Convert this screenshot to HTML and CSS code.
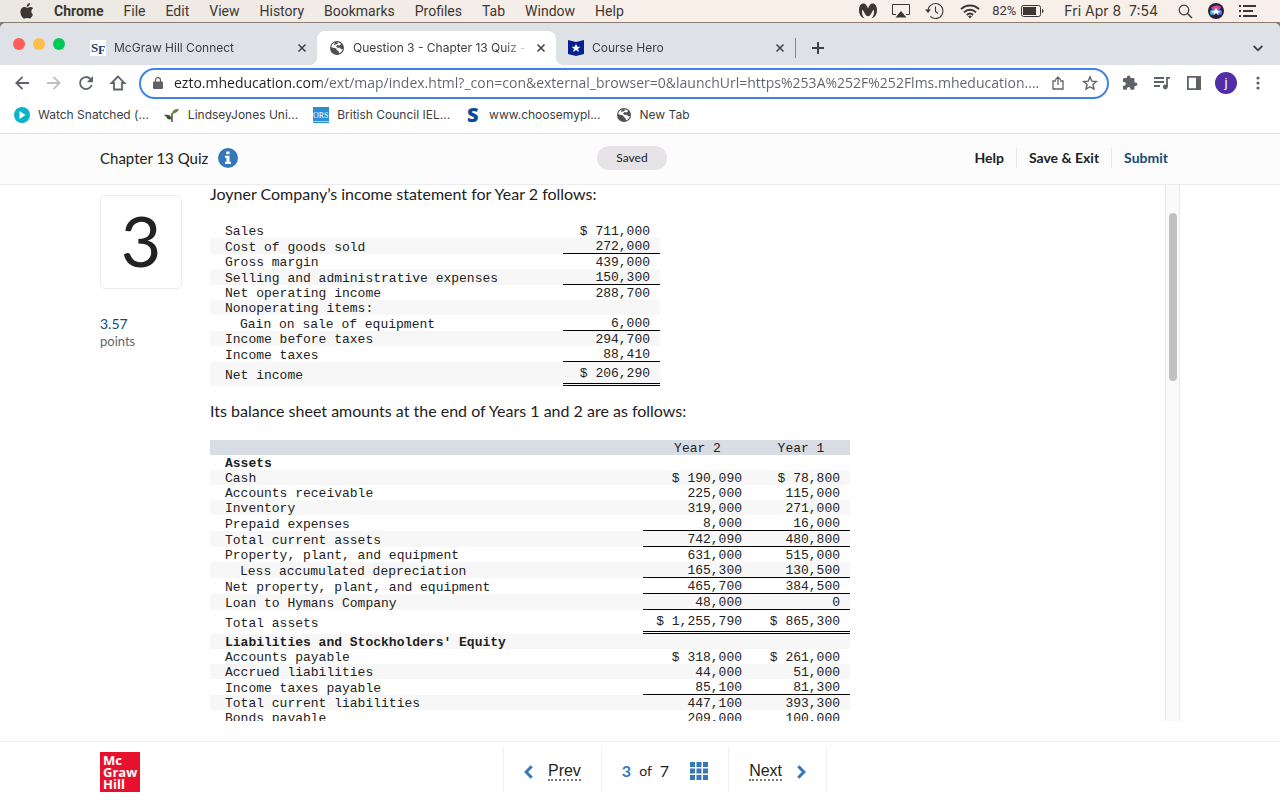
FILE: index.html
```html
<!DOCTYPE html>
<html lang="en">
<head>
  <meta charset="UTF-8">
  <meta name="viewport" content="width=device-width, initial-scale=1.0">
  <title>Question 3 - Chapter 13 Quiz</title>
  <link rel="stylesheet" href="styles.css">
</head>
<body>
  <!-- System menu bar -->
  <div class="menubar">
    <nav class="menus">
      <svg class="apple" width="14" height="16" viewBox="0 0 14 16"><path fill="#3c3733" d="M9.9 0c.1 1.1-.3 2-.9 2.700-.6.7-1.400 1.100-2.300 1.100-.1-1 .3-1.900.9-2.600C8.200.5 9.100.1 9.900 0zM13 11.600c-.4 1-1.700 3.700-3 3.900-1 .1-1.500-.6-2.800-.6s-1.800.6-2.800.6C2.600 15.500.4 11.800.4 8.700.4 5.600 2.400 4 4.200 4c1.200 0 2.100.7 2.900.7.700 0 1.900-.9 3.300-.8 1 0 2 .5 2.700 1.400-2.400 1.500-2.200 5.200-.1 6.300z"/></svg>
      <button class="menu app">Chrome</button>
      <button class="menu">File</button>
      <button class="menu">Edit</button>
      <button class="menu">View</button>
      <button class="menu">History</button>
      <button class="menu">Bookmarks</button>
      <button class="menu">Profiles</button>
      <button class="menu">Tab</button>
      <button class="menu">Window</button>
      <button class="menu">Help</button>
    </nav>
    <div class="status">
      <svg width="18" height="16" viewBox="0 0 18 16"><path fill="#3c3733" d="M4.500.5C6.500.5 8 2.500 9 5.500 10 2.500 11.500.5 13.500.5c2.700 0 4.500 2.700 4.500 6.500 0 4-2 7.500-5.500 8.500 2.200-2.400 3-5.500 2.300-9-1.300 1.300-2.100 3.200-3 4.800-.7 1.200-1.700 1.900-2.800 1.900s-2.100-.7-2.800-1.900c-.9-1.600-1.700-3.500-3-4.800-.7 3.500.1 6.600 2.300 9C2 14.500 0 11 0 7 0 3.200 1.800.5 4.500.5z"/></svg>
      <svg width="18" height="16" viewBox="0 0 18 16"><path fill="none" stroke="#3c3733" d="M4 11.500H.5v-10h17v10H14"/><path fill="#3c3733" d="M9 8l5.500 6.500h-11z"/></svg>
      <svg width="20" height="18" viewBox="0 0 20 18"><path fill="none" stroke="#3c3733" stroke-width="1.100" d="M3 9a7.500 7.500 0 1 1 2.300 5.400M10.500 4.500V9.500l2.500 2"/><path fill="#3c3733" d="M0 7.500h6L3 11z"/></svg>
      <svg width="20" height="15" viewBox="0 0 20 15"><path fill="none" stroke="#3c3733" stroke-width="1.900" d="M1 5.200c5-5 13-5 18 0M4 8.300c3.400-3.400 8.600-3.400 12 0M6.800 11c1.900-1.700 4.500-1.700 6.400 0"/><path fill="#3c3733" d="M8 12.300c1.300-1 2.700-1 4 0L10 14.500z"/></svg>
      <span class="battery-text">82%</span>
      <svg class="battery" width="23" height="12" viewBox="0 0 23 12"><rect x=".5" y=".5" width="19" height="11" rx="2" fill="none" stroke="#3c3733"/><rect x="2" y="2" width="13" height="8" fill="#3c3733"/><path fill="#3c3733" d="M21 4c2 .5 2 3.500 0 4z"/></svg>
      <span class="clock">Fri Apr 8&nbsp; 7:54</span>
      <svg class="spotlight" width="15" height="15" viewBox="0 0 15 15"><circle cx="6" cy="6" r="4.800" fill="none" stroke="#3c3733" stroke-width="1.200"/><path stroke="#3c3733" stroke-width="1.500" d="M9.500 9.500l4.500 4.500"/></svg>
      <svg class="siri" width="16" height="16" viewBox="0 0 16 16">
        <circle cx="8" cy="8" r="8" fill="#26203a"/>
        <path fill="#e0408c" d="M3 5c3-3 7-3 10-1-1 3-3 4-5 4S4 7 3 5z"/>
        <path fill="#3bb8e0" d="M2 8c3-2 5-1 6 0-1 2-3 4-5 4-1-1-1-2-1-4z"/>
        <path fill="#4a78e8" d="M14 8c-3-2-5-1-6 0 1 2 3 4 5 4 1-1 1-2 1-4z"/>
        <path fill="#fff" d="M8 4.500l1.500 3L13 9l-3 .5.500 3L8 10l-2.500 2.500.5-3L3 9l3.500-1.500z"/>
      </svg>
      <svg class="list" width="18" height="12" viewBox="0 0 18 12"><path stroke="#3c3733" stroke-width="2" d="M0 1h2M0 6h2M0 11h2M4 1h13M4 6h10M4 11h14"/></svg>
    </div>
  </div>

  <div class="window">
    <!-- Tabs -->
    <div class="tabstrip">
      <div class="lights"><i class="red"></i><i class="yellow"></i><i class="green"></i></div>
      <div class="tab">
        <svg width="16" height="16" viewBox="0 0 16 16"><rect width="16" height="16" fill="#fff"/><text x="1" y="12" font-family="Liberation Serif, serif" font-size="13" font-weight="700" fill="#1f3864">S</text><text x="8" y="14" font-family="Liberation Serif, serif" font-size="12" font-weight="700" fill="#1f3864">F</text></svg>
        <span class="tab-title">McGraw Hill Connect</span>
        <button class="close" aria-label="Close tab"><svg width="8" height="8" viewBox="0 0 8 8"><path d="M.5.5l7 7M7.500.5l-7 7"/></svg></button>
      </div>
      <div class="tab active">
        <svg width="16" height="16" viewBox="0 0 16 16"><circle cx="8" cy="8" r="7" fill="#4d5156"/><path fill="#fff" d="M8 2.200c1.800 0 3.200.7 4.200 1.800L10.500 5.500 8.500 5 7 6.500l1.500 1.300H11l1 1.500 1.800-.3c-.4 2-1.800 3.800-3.800 4.500l-.5-2.500-2-1V8.500L4 7.800 2.200 7C2.600 4.200 5 2.200 8 2.200z"/><path fill="#4d5156" d="M6 2l3 .5-.5 1.500L5 5z"/></svg>
        <span class="tab-title">Question 3 - Chapter 13 Quiz -</span>
        <button class="close" aria-label="Close tab"><svg width="8" height="8" viewBox="0 0 8 8"><path d="M.5.5l7 7M7.500.5l-7 7"/></svg></button>
      </div>
      <div class="tab">
        <svg width="16" height="16" viewBox="0 0 16 16"><path fill="#06218f" d="M0 0l8 2 8-2v14l-8 2-8-2z"/><path fill="#fff" d="M8 3.800l1.300 3h3.200L10 8.800l1 3.200-3-1.900L5 12l1-3.200-2.500-2h3.200z"/></svg>
        <span class="tab-title">Course Hero</span>
        <button class="close" aria-label="Close tab"><svg width="8" height="8" viewBox="0 0 8 8"><path d="M.5.5l7 7M7.500.5l-7 7"/></svg></button>
      </div>
      <button class="new-tab" aria-label="New tab"><svg width="12" height="12" viewBox="0 0 12 12"><path stroke="#3c4043" stroke-width="2" d="M6 0v12M0 6h12"/></svg></button>
      <button class="tab-search" aria-label="Search tabs"><svg width="10" height="7" viewBox="0 0 10 7"><path fill="none" stroke="#3c4043" stroke-width="1.800" d="M.7 1L5 5.300 9.300 1"/></svg></button>
    </div>

    <!-- Toolbar -->
    <div class="toolbar">
      <button class="tool" aria-label="Back"><svg width="14" height="14" viewBox="0 0 14 14"><path class="line" d="M14 7H1.500M7.500.8L1.300 7l6.200 6.200"/></svg></button>
      <button class="tool off" aria-label="Forward"><svg width="14" height="14" viewBox="0 0 14 14"><path class="line" d="M0 7h12.500M6.500.8L12.700 7l-6.200 6.200"/></svg></button>
      <button class="tool" aria-label="Reload"><svg width="14" height="14" viewBox="0 0 14 14"><path class="line" d="M12.700 9A6 6 0 1 1 11.400 2.900L13 4.500"/><path fill="#5f6368" d="M14 0v6.200H7.800z"/></svg></button>
      <button class="tool" aria-label="Home"><svg width="16" height="16" viewBox="0 0 16 16"><path class="line" d="M8 1.500L1.500 8H4v6.500h8V8h2.500z"/></svg></button>
      <div class="omnibox">
        <svg width="10" height="12" viewBox="0 0 10 12"><path fill="#5f6368" d="M1 4.500h8a1 1 0 0 1 1 1V11a1 1 0 0 1-1 1H1a1 1 0 0 1-1-1V5.500a1 1 0 0 1 1-1z"/><path fill="none" stroke="#5f6368" stroke-width="1.300" d="M2.500 5V3a2.500 2.300 0 0 1 5 0v2"/></svg>
        <input class="url" type="text" aria-label="Address" value="ezto.mheducation.com/ext/map/index.html?_con=con&amp;external_browser=0&amp;launchUrl=https%253A%252F%252Flms.mheducation....">
        <button class="tool" aria-label="Share"><svg width="12" height="14" viewBox="0 0 12 14"><path fill="none" stroke="#5f6368" stroke-width="1.300" d="M4 5H1v8h10V5H8M6 9V1.200M3.300 3.800L6 1.100l2.700 2.700"/></svg></button>
        <button class="tool" aria-label="Bookmark this tab"><svg width="16" height="16" viewBox="0 0 16 16"><path fill="none" stroke="#5f6368" stroke-width="1.400" d="M8 1.800l1.800 4.300 4.600.4-3.500 3 1.100 4.600L8 11.700l-4 2.400 1.100-4.600-3.500-3 4.600-.4z"/></svg></button>
      </div>
      <button class="tool" aria-label="Extensions"><svg width="16" height="16" viewBox="0 0 16 16"><path fill="#5f6368" d="M13.700 7.500H12.500V4.300c0-.7-.6-1.300-1.300-1.300H8.500V2.200a1.800 1.800 0 0 0-3.600 0V3H2.200C1.500 3 1 3.600 1 4.300v2.600h1a1.900 1.900 0 0 1 0 3.800H1v2.900c0 .7.500 1.200 1.200 1.200h2.700v-1a1.800 1.800 0 0 1 3.600 0v1h2.700c.7 0 1.300-.5 1.300-1.200v-2.700h1.200a1.700 1.700 0 0 0 0-3.400z"/></svg></button>
      <button class="tool" aria-label="Media controls"><svg width="16" height="14" viewBox="0 0 16 14"><path class="line" d="M0 2h10M0 6h10M0 10h6M13 11V1.800h3"/><circle cx="11.300" cy="11" r="2.400" fill="#5f6368"/></svg></button>
      <button class="tool" aria-label="Side panel"><svg width="14" height="14" viewBox="0 0 14 14"><path fill="none" stroke="#5f6368" stroke-width="1.800" d="M.9.9h12.200v12.200H.9z"/><path fill="#5f6368" d="M9 0h5v14H9z"/></svg></button>
      <button class="tool" aria-label="Profile"><span class="avatar">j</span></button>
      <button class="tool" aria-label="Menu"><svg width="4" height="14" viewBox="0 0 4 14"><circle cx="2" cy="2" r="1.600" fill="#5f6368"/><circle cx="2" cy="7" r="1.600" fill="#5f6368"/><circle cx="2" cy="12" r="1.600" fill="#5f6368"/></svg></button>
    </div>

    <!-- Bookmarks -->
    <nav class="bookmarks">
      <a href="#"><svg width="16" height="16" viewBox="0 0 16 16"><circle cx="8" cy="8" r="8" fill="#0ab4c8"/><path fill="#fff" d="M5.500 4l6 4-6 4z"/></svg>Watch Snatched (...</a>
      <a href="#"><svg width="16" height="16" viewBox="0 0 16 16"><path fill="none" stroke="#5b4a35" stroke-width="1.500" d="M8 15V6"/><path fill="#2f5a2c" d="M0 8c4-1 7 0 8 4-3 1-5 0-5.500-2z"/><path fill="#5b8a3c" d="M8 7c0-4 3-5 7-5-1 2-2 4-7 5z"/></svg>LindseyJones Uni...</a>
      <a href="#"><svg width="16" height="16" viewBox="0 0 16 16"><rect width="16" height="16" fill="#2b8fd8"/><path stroke="#a9d3ef" d="M0 14.500h16"/><text x="0" y="11" font-family="Liberation Serif, serif" font-size="8" fill="#fff">ORS</text></svg>British Council IEL...</a>
      <a href="#"><svg width="16" height="16" viewBox="0 0 16 16"><text x="2" y="15" font-family="Open Sans, sans-serif" font-size="20" font-weight="800" fill="#0b4a94">S</text></svg>www.choosemypl...</a>
      <a href="#"><svg width="16" height="16" viewBox="0 0 16 16"><circle cx="8" cy="8" r="7" fill="#4d5156"/><path fill="#fff" d="M8 2.200c1.800 0 3.200.7 4.200 1.800L10.500 5.500 8.500 5 7 6.500l1.500 1.300H11l1 1.500 1.800-.3c-.4 2-1.800 3.800-3.800 4.500l-.5-2.500-2-1V8.500L4 7.800 2.200 7C2.600 4.200 5 2.200 8 2.200z"/><path fill="#4d5156" d="M6 2l3 .5-.5 1.500L5 5z"/></svg>New Tab</a>
    </nav>

    <!-- Quiz page -->
    <header class="quiz-header">
      <div class="wrap header-row">
        <div class="quiz-title">
          <span>Chapter 13 Quiz</span>
          <button class="info" aria-label="Information"><svg width="20" height="20" viewBox="0 0 20 20"><circle cx="10" cy="10" r="10" fill="#3578b9"/><path fill="#fff" d="M8.300 3.500h3.200v2.800H8.300zM7 7.800h4.500v6H13V16H7v-2.200h1.500V10H7z"/></svg></button>
        </div>
        <div class="saved">Saved</div>
        <div class="actions">
          <button>Help</button>
          <button>Save &amp; Exit</button>
          <button class="submit">Submit</button>
        </div>
      </div>
    </header>

    <main class="wrap question">
      <aside class="meta">
        <div class="number">3</div>
        <div class="score">3.57</div>
        <div class="points">points</div>
      </aside>
      <section class="content">
        <p>Joyner Company’s income statement for Year 2 follows:</p>
        <table class="income">
          <tbody>
            <tr><td>Sales</td><td>$ 711,000</td></tr>
            <tr><td>Cost of goods sold</td><td class="sum">272,000</td></tr>
            <tr><td>Gross margin</td><td>439,000</td></tr>
            <tr><td>Selling and administrative expenses</td><td class="sum">150,300</td></tr>
            <tr><td>Net operating income</td><td>288,700</td></tr>
            <tr><td>Nonoperating items:</td><td></td></tr>
            <tr><td class="indent">Gain on sale of equipment</td><td class="sum">6,000</td></tr>
            <tr><td>Income before taxes</td><td>294,700</td></tr>
            <tr><td>Income taxes</td><td class="sum">88,410</td></tr>
            <tr><td>Net income</td><td class="total">$ 206,290</td></tr>
          </tbody>
        </table>
        <p>Its balance sheet amounts at the end of Years 1 and 2 are as follows:</p>
        <table class="balance">
          <thead>
            <tr><th></th><th>Year 2</th><th>Year 1</th></tr>
          </thead>
          <tbody>
            <tr><td><b>Assets</b></td><td></td><td></td></tr>
            <tr><td>Cash</td><td>$ 190,090</td><td>$ 78,800</td></tr>
            <tr><td>Accounts receivable</td><td>225,000</td><td>115,000</td></tr>
            <tr><td>Inventory</td><td>319,000</td><td>271,000</td></tr>
            <tr><td>Prepaid expenses</td><td class="sum">8,000</td><td class="sum">16,000</td></tr>
            <tr><td>Total current assets</td><td class="sum">742,090</td><td class="sum">480,800</td></tr>
            <tr><td>Property, plant, and equipment</td><td>631,000</td><td>515,000</td></tr>
            <tr><td class="indent">Less accumulated depreciation</td><td class="sum">165,300</td><td class="sum">130,500</td></tr>
            <tr><td>Net property, plant, and equipment</td><td class="sum">465,700</td><td class="sum">384,500</td></tr>
            <tr><td>Loan to Hymans Company</td><td class="sum">48,000</td><td class="sum">0</td></tr>
            <tr><td>Total assets</td><td class="total">$ 1,255,790</td><td class="total">$ 865,300</td></tr>
            <tr><td><b>Liabilities and Stockholders' Equity</b></td><td></td><td></td></tr>
            <tr><td>Accounts payable</td><td>$ 318,000</td><td>$ 261,000</td></tr>
            <tr><td>Accrued liabilities</td><td>44,000</td><td>51,000</td></tr>
            <tr><td>Income taxes payable</td><td class="sum">85,100</td><td class="sum">81,300</td></tr>
            <tr><td>Total current liabilities</td><td>447,100</td><td>393,300</td></tr>
            <tr><td>Bonds payable</td><td>209,000</td><td>100,000</td></tr>
          </tbody>
        </table>
      </section>
      <div class="scroll-track"><div class="scroll-thumb"></div></div>
    </main>

    <footer class="quiz-footer">
      <div class="wrap footer-row">
        <div class="mh-logo">Mc<br>Graw<br>Hill</div>
        <nav class="pager">
          <a class="step" href="#"><svg width="9" height="14" viewBox="0 0 9 14"><path d="M7.700 1.300L2.200 7l5.500 5.700"/></svg><span>Prev</span></a>
          <div class="count"><b>3</b> <span class="of">of</span> <span>7</span>
            <button class="grid" aria-label="All questions"><svg width="18" height="18" viewBox="0 0 18 18"><path fill="#3578b9" d="M0 0h5v5H0zM6.500 0h5v5h-5zM13 0h5v5h-5zM0 6.500h5v5H0zM6.500 6.500h5v5h-5zM13 6.500h5v5h-5zM0 13h5v5H0zM6.500 13h5v5h-5zM13 13h5v5h-5z"/></svg></button>
          </div>
          <a class="step" href="#"><span>Next</span><svg width="9" height="14" viewBox="0 0 9 14"><path d="M1.300 1.300L6.800 7l-5.500 5.700"/></svg></a>
        </nav>
      </div>
    </footer>
  </div>
</body>
</html>
```
FILE: styles.css
```css
* {
  box-sizing: border-box;
}

body {
  margin: 0;
  height: 100vh;
  display: flex;
  flex-direction: column;
  overflow: hidden;
  background: #8d7c72;
  color: #222;
  font-family: Lato, "Liberation Sans", sans-serif;
}

button {
  margin: 0;
  padding: 0;
  border: none;
  background: none;
  color: inherit;
  font: inherit;
}

svg {
  display: block;
  flex: none;
  overflow: visible;
}

a {
  color: inherit;
  text-decoration: none;
}

/* System menu bar */
.menubar {
  display: flex;
  justify-content: space-between;
  align-items: center;
  height: 22px;
  margin-bottom: 1px;
  padding: 0 23px 0 20px;
  background: linear-gradient(90deg, #ebe8e2, #f8efe9 50%, #f8efea);
  color: #3c3733;
  font: 14px/22px Roboto, sans-serif;
}

.menus,
.status {
  display: flex;
  align-items: center;
}

.menus {
  gap: 20px;
}

.app {
  font-weight: 700;
}

.status > * {
  margin-left: 15px;
}

.status .battery-text {
  margin-left: 12px;
  font-size: 13px;
}

.status .battery {
  margin-left: 5px;
}

.status .clock,
.status .spotlight {
  margin-left: 20px;
}

.clock {
  font: 14px/22px Inter, sans-serif;
}

/* Browser window */
.window {
  flex: 1;
  min-height: 0;
  display: flex;
  flex-direction: column;
  border-radius: 6px 6px 0 0;
  overflow: hidden;
  background: #fff;
}

.tabstrip {
  display: flex;
  align-items: flex-end;
  height: 42px;
  padding-right: 12px;
  background: #dee1e6;
  color: #3c4043;
  font: 12px/16px Inter, sans-serif;
}

.lights {
  display: flex;
  gap: 8px;
  width: 78px;
  padding: 0 0 15px 13px;
}

.lights i {
  width: 12px;
  height: 12px;
  border-radius: 50%;
}

.red {
  background: #ff5c5c;
}

.yellow {
  background: #ffbd4c;
}

.green {
  background: #00ca56;
}

.tab {
  position: relative;
  display: flex;
  align-items: center;
  gap: 8px;
  width: 239px;
  height: 34px;
  padding: 0 11px 0 12px;
}

.tab.active {
  border-radius: 8px 8px 0 0;
  background: #fff;
}

.tab.active::before,
.tab.active::after {
  content: '';
  position: absolute;
  bottom: 0;
  width: 8px;
  height: 8px;
}

.tab.active::before {
  left: -8px;
  background: radial-gradient(circle at 0 0, transparent 8px, #fff 8px);
}

.tab.active::after {
  right: -8px;
  background: radial-gradient(circle at 100% 0, transparent 8px, #fff 8px);
}

.tab-title {
  flex: 1;
  min-width: 0;
  overflow: hidden;
  white-space: nowrap;
  mask-image: linear-gradient(90deg, #000 calc(100% - 24px), transparent);
}

.close path {
  fill: none;
  stroke: #3c4043;
  stroke-width: 1.5px;
}

.new-tab {
  height: 20px;
  margin-bottom: 7px;
  padding: 0 16px;
  border-left: 1px solid #85888c;
}

.tab-search {
  margin: 0 5px 13px auto;
}

.toolbar {
  display: flex;
  align-items: center;
  height: 36px;
  padding: 0 6px;
}

.tool {
  flex: none;
  display: flex;
  align-items: center;
  justify-content: center;
  width: 32px;
  height: 30px;
}

.tool.off {
  opacity: 0.4;
}

.line {
  fill: none;
  stroke: #5f6368;
  stroke-width: 1.8px;
}

.omnibox {
  flex: 1;
  display: flex;
  align-items: center;
  height: 31px;
  margin: 0 5px;
  padding: 0 1px 0 12px;
  border: 2px solid #3f83e8;
  border-radius: 16px;
}

/* Host part is darker than the path */
.url {
  flex: 1;
  min-width: 0;
  padding: 0 0 0 11px;
  border: none;
  outline: none;
  background: linear-gradient(90deg, #202124 158px, #5f6368 158px);
  background-clip: text;
  -webkit-background-clip: text;
  color: transparent;
  font: 14px/20px "Open Sans", sans-serif;
}

.avatar {
  width: 22px;
  height: 22px;
  border-radius: 50%;
  background: #512da8;
  color: #fff;
  font: 13px/21px Roboto, sans-serif;
}

.bookmarks {
  display: flex;
  gap: 15px;
  height: 33px;
  padding: 6px 14px;
  border-bottom: 1px solid #dadce0;
  color: #3c4043;
  font: 12px/16px Inter, sans-serif;
}

.bookmarks a {
  display: flex;
  gap: 8px;
}

/* Quiz page */
.wrap {
  width: 100%;
  max-width: 1080px;
  margin: 0 auto;
}

.quiz-header {
  background: #fcfcfc;
  border-bottom: 1px solid #ececec;
}

.header-row {
  display: grid;
  grid-template-columns: 1fr auto 1fr;
  align-items: center;
  height: 50px;
  padding-bottom: 2px;
}

.quiz-title {
  display: flex;
  align-items: center;
  gap: 10px;
  font-size: 15px;
  line-height: 20px;
}

.saved {
  width: 70px;
  margin-right: 16px;
  border-radius: 12px;
  background: #e5e3e6;
  font-size: 12px;
  line-height: 24px;
  text-align: center;
}

.actions {
  display: flex;
  justify-content: flex-end;
}

.actions button {
  padding: 0 12px;
  font-size: 14px;
  font-weight: 700;
  line-height: 20px;
}

.actions button + button {
  border-left: 1px solid #e6e6e6;
}

.actions .submit {
  color: #144a7c;
}

.question {
  flex: 1;
  min-height: 0;
  display: flex;
  overflow: hidden;
}

.meta {
  flex: none;
  width: 110px;
  padding-top: 10px;
}

.number {
  width: 82px;
  padding-bottom: 4px;
  border: 1px solid #ececec;
  border-radius: 5px;
  font-size: 70px;
  line-height: 88px;
  text-align: center;
}

.score {
  margin-top: 26px;
  color: #144a7c;
  font-size: 14px;
  line-height: 18px;
}

.points {
  color: #666;
  font-size: 13px;
  line-height: 16px;
}

.content {
  flex: 1;
}

.content p {
  margin: 0;
  font-size: 16px;
  line-height: 18px;
}

table {
  border-collapse: separate;
  border-spacing: 0;
  table-layout: fixed;
  font: 13px/13px "Liberation Mono", monospace;
}

.income {
  width: 450px;
  margin: 20px 0 16px;
}

.balance {
  width: 640px;
  margin-top: 20px;
}

td,
th {
  height: 15px;
  padding: 2px 0 0;
  font-weight: 400;
}

td {
  padding-right: 10px;
  text-align: right;
}

td:first-child {
  padding: 2px 0 0 15px;
  text-align: left;
}

td.indent:first-child {
  padding-left: 30px;
}

.income td:first-child {
  width: 353px;
}

.income td:last-child {
  width: 97px;
}

.balance th:nth-child(2) {
  width: 109px;
}

.balance th:nth-child(3) {
  width: 98px;
}

thead {
  background: #d8dce5;
}

tbody tr:nth-child(even) {
  background: #f7f7f7;
}

.sum {
  height: 16px;
  border-bottom: 1px solid #000;
}

.total {
  padding: 5px 10px 3px 0;
  border-bottom: 3px double #000;
}

.scroll-track {
  flex: none;
  width: 15px;
  padding: 28px 3px 0;
  border: solid #e8e8e8;
  border-width: 0 1px;
  background: #fafafa;
}

.scroll-thumb {
  width: 8px;
  height: 33%;
  border-radius: 4px;
  background: #c1c1c1;
}

/* Footer */
.quiz-footer {
  margin-top: 20px;
  border-top: 1px solid #f0f0f0;
}

.footer-row {
  display: flex;
  align-items: flex-start;
  gap: 10px;
  padding: 5px 0 8px;
}

.mh-logo {
  width: 40px;
  height: 40px;
  margin-top: 5px;
  padding: 2px 3px;
  background: #e8112d;
  color: #fff;
  font: 700 13px/12px "Open Sans", sans-serif;
}

.pager {
  display: flex;
  margin: 0 auto;
  border-right: 1px solid #f0f0f0;
  font-size: 16px;
  line-height: 20px;
}

.step,
.count {
  display: flex;
  align-items: center;
  justify-content: center;
  height: 45px;
  padding: 4px 20px 0;
  border-left: 1px solid #f0f0f0;
}

.step {
  gap: 15px;
  font-family: "Liberation Sans", sans-serif;
}

.step span {
  border-bottom: 2px dotted #777;
  line-height: 16px;
}

.step path {
  fill: none;
  stroke: #3578b9;
  stroke-width: 3px;
}

.count {
  gap: 8px;
  padding-top: 2px;
}

.count b {
  color: #3578b9;
}

.of {
  font-size: 14px;
}

.grid {
  margin-left: 13px;
}
```
